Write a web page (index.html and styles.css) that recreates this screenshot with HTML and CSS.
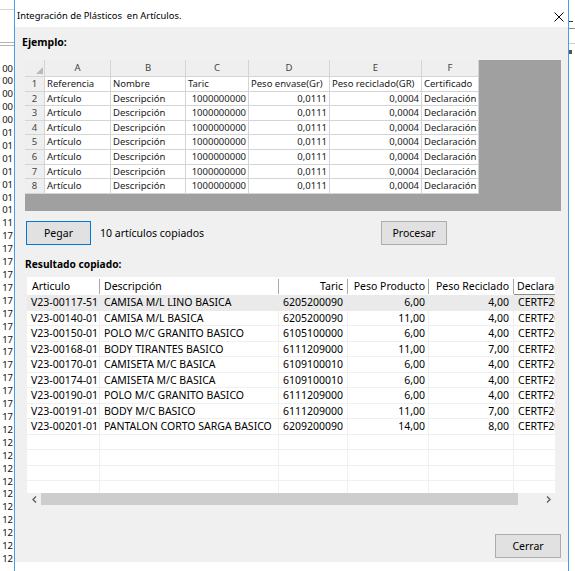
FILE: index.html
```html
<!DOCTYPE html>
<html lang="es">
<head>
<meta charset="utf-8">
<title>Integración de Plásticos en Artículos</title>
<link rel="stylesheet" href="styles.css">
</head>
<body>
<div class="screen">
  <div class="strip-left">
    <div class="strip-rule"></div>
    <div class="strip-eq"></div>
    <div class="strip-cells">
      <div>00</div><div>00</div><div>00</div><div>00</div><div>00</div>
      <div>01</div><div>01</div><div>01</div><div>01</div><div>01</div><div>01</div><div>01</div>
      <div>11</div>
      <div>17</div><div>17</div><div>17</div><div>17</div><div>17</div><div>17</div><div>17</div><div>17</div><div>17</div><div>17</div><div>17</div><div>17</div><div>17</div><div>17</div><div>17</div>
      <div>12</div><div>12</div><div>12</div><div>12</div><div>12</div><div>12</div><div>12</div><div>12</div><div>12</div><div>12</div><div>12</div>
    </div>
  </div>

  <div class="dialog">
    <div class="titlebar">
      <span class="title">Integración de Plásticos  en Artículos.</span>
      <svg class="close" viewBox="0 0 10 10" width="10" height="10"><path d="M0.5 0.5 L9.5 9.5 M9.5 0.5 L0.5 9.5" stroke="#000" stroke-width="1" fill="none"/></svg>
    </div>

    <div class="body">
      <div class="label">Ejemplo:</div>

      <div class="example">
        <div class="xl">
          <div class="xh corner"><svg viewBox="0 0 7 7" width="7" height="7"><path d="M7 0 L7 7 L0 7 Z" fill="#b9b9b9"/></svg></div>
          <div class="xh">A</div><div class="xh">B</div><div class="xh">C</div><div class="xh">D</div><div class="xh">E</div><div class="xh">F</div>

          <div class="xn">1</div><div>Referencia</div><div>Nombre</div><div>Taric</div><div>Peso envase(Gr)</div><div>Peso reciclado(GR)</div><div>Certificado</div>
          <div class="xn">2</div><div>Artículo</div><div>Descripción</div><div class="r">1000000000</div><div class="r">0,0111</div><div class="r">0,0004</div><div>Declaración</div>
          <div class="xn">3</div><div>Artículo</div><div>Descripción</div><div class="r">1000000000</div><div class="r">0,0111</div><div class="r">0,0004</div><div>Declaración</div>
          <div class="xn">4</div><div>Artículo</div><div>Descripción</div><div class="r">1000000000</div><div class="r">0,0111</div><div class="r">0,0004</div><div>Declaración</div>
          <div class="xn">5</div><div>Artículo</div><div>Descripción</div><div class="r">1000000000</div><div class="r">0,0111</div><div class="r">0,0004</div><div>Declaración</div>
          <div class="xn">6</div><div>Artículo</div><div>Descripción</div><div class="r">1000000000</div><div class="r">0,0111</div><div class="r">0,0004</div><div>Declaración</div>
          <div class="xn">7</div><div>Artículo</div><div>Descripción</div><div class="r">1000000000</div><div class="r">0,0111</div><div class="r">0,0004</div><div>Declaración</div>
          <div class="xn">8</div><div>Artículo</div><div>Descripción</div><div class="r">1000000000</div><div class="r">0,0111</div><div class="r">0,0004</div><div>Declaración</div>
        </div>
      </div>

      <div class="actions">
        <button class="btn btn-default btn-pegar">Pegar</button>
        <span class="count">10 artículos copiados</span>
        <button class="btn btn-procesar">Procesar</button>
      </div>

      <div class="label label-result">Resultado copiado:</div>

      <div class="gv">
        <div class="gv-head">
          <div class="h h1">Articulo</div>
          <div class="h h2">Descripción</div>
          <div class="h h3">Taric</div>
          <div class="h h4">Peso Producto</div>
          <div class="h h5">Peso Reciclado</div>
          <div class="h h6">Declaración</div>
        </div>
        <div class="gv-body">
          <div class="gv-row sel"><div class="c1">V23-00117-51</div><div class="c2">CAMISA M/L LINO BASICA</div><div class="c3">6205200090</div><div class="c4">6,00</div><div class="c5">4,00</div><div class="c6">CERTF2023</div></div>
          <div class="gv-row"><div class="c1">V23-00140-01</div><div class="c2">CAMISA M/L BASICA</div><div class="c3">6205200090</div><div class="c4">11,00</div><div class="c5">4,00</div><div class="c6">CERTF2023</div></div>
          <div class="gv-row"><div class="c1">V23-00150-01</div><div class="c2">POLO M/C GRANITO BASICO</div><div class="c3">6105100000</div><div class="c4">6,00</div><div class="c5">4,00</div><div class="c6">CERTF2023</div></div>
          <div class="gv-row"><div class="c1">V23-00168-01</div><div class="c2">BODY TIRANTES BASICO</div><div class="c3">6111209000</div><div class="c4">11,00</div><div class="c5">7,00</div><div class="c6">CERTF2023</div></div>
          <div class="gv-row"><div class="c1">V23-00170-01</div><div class="c2">CAMISETA M/C BASICA</div><div class="c3">6109100010</div><div class="c4">6,00</div><div class="c5">4,00</div><div class="c6">CERTF2023</div></div>
          <div class="gv-row"><div class="c1">V23-00174-01</div><div class="c2">CAMISETA M/C BASICA</div><div class="c3">6109100010</div><div class="c4">6,00</div><div class="c5">4,00</div><div class="c6">CERTF2023</div></div>
          <div class="gv-row"><div class="c1">V23-00190-01</div><div class="c2">POLO M/C GRANITO BASICO</div><div class="c3">6111209000</div><div class="c4">6,00</div><div class="c5">4,00</div><div class="c6">CERTF2023</div></div>
          <div class="gv-row"><div class="c1">V23-00191-01</div><div class="c2">BODY M/C BASICO</div><div class="c3">6111209000</div><div class="c4">11,00</div><div class="c5">7,00</div><div class="c6">CERTF2023</div></div>
          <div class="gv-row"><div class="c1">V23-00201-01</div><div class="c2">PANTALON CORTO SARGA BASICO</div><div class="c3">6209200090</div><div class="c4">14,00</div><div class="c5">8,00</div><div class="c6">CERTF2023</div></div>
          <div class="gv-row"><div class="c1"></div><div class="c2"></div><div class="c3"></div><div class="c4"></div><div class="c5"></div><div class="c6"></div></div>
          <div class="gv-row"><div class="c1"></div><div class="c2"></div><div class="c3"></div><div class="c4"></div><div class="c5"></div><div class="c6"></div></div>
          <div class="gv-row"><div class="c1"></div><div class="c2"></div><div class="c3"></div><div class="c4"></div><div class="c5"></div><div class="c6"></div></div>
          <div class="gv-row"><div class="c1"></div><div class="c2"></div><div class="c3"></div><div class="c4"></div><div class="c5"></div><div class="c6"></div></div>
        </div>
        <div class="gv-scroll">
          <div class="sb-btn"><svg viewBox="0 0 5 7" width="5" height="7"><path d="M4 0.5 L1 3.5 L4 6.5" stroke="#606060" stroke-width="1.4" fill="none"/></svg></div>
          <div class="sb-thumb"></div>
          <div class="sb-track"></div>
          <div class="sb-btn"><svg viewBox="0 0 5 7" width="5" height="7"><path d="M1 0.5 L4 3.5 L1 6.5" stroke="#606060" stroke-width="1.4" fill="none"/></svg></div>
        </div>
      </div>

      <div class="footer">
        <button class="btn btn-cerrar">Cerrar</button>
      </div>
    </div>
    <div class="dialog-bottom"></div>
  </div>

  <div class="strip-right">
    <div class="rs-a"></div>
    <div class="rs-b"></div>
    <div class="rs-c"></div>
    <div class="rs-d"></div>
  </div>
</div>
</body>
</html>
```

FILE: styles.css
```css
* { box-sizing: border-box; }

html, body {
  margin: 0;
  padding: 0;
}

body {
  width: 575px;
  height: 571px;
  overflow: hidden;
  background: #fff;
  color: #000;
  font-family: "Noto Sans", "Open Sans", sans-serif;
  font-size: 10.5px;
}

.screen {
  display: flex;
  width: 575px;
  height: 571px;
}

/* background spreadsheet peeking on the left */
.strip-left {
  width: 14px;
  flex: none;
  background: #fff;
  overflow: hidden;
  padding-top: 9px;
}

.strip-rule {
  height: 1px;
  background: #d6d6d6;
}

.strip-eq {
  margin-top: 32px;
  height: 4px;
  border-top: 1px solid #b4b4b4;
  border-bottom: 1px solid #b4b4b4;
}

.strip-cells {
  margin-top: 16.5px;
  font-size: 9.5px;
  line-height: 12.9px;
  text-align: right;
  white-space: nowrap;
  color: #111;
  padding-right: 1px;
}

/* dialog window */
.dialog {
  width: 555px;
  flex: none;
  display: flex;
  flex-direction: column;
  background: #fff;
  border-left: 1px solid #4c9be6;
  border-right: 1px solid #4c9be6;
}

.titlebar {
  height: 27px;
  flex: none;
  display: flex;
  justify-content: space-between;
  align-items: flex-start;
  padding: 8px 4px 0 2px;
  background: #fff;
}

.title {
  font-size: 9.4px;
  line-height: 16px;
  white-space: pre;
}

.close {
  margin-top: 4px;
  display: block;
}

.body {
  height: 535px;
  flex: none;
  display: flex;
  flex-direction: column;
  align-items: flex-start;
  background: #f0f0f0;
}

.label {
  font-weight: 700;
  line-height: 16px;
  margin: 7px 0 0 7px;
}

.label-result {
  margin: 11px 0 0 10px;
  font-size: 10.2px;
}

/* example spreadsheet picture */
.example {
  margin: 10px 0 0 10px;
  width: 536px;
  height: 151px;
  background: #a0a0a0;
}

.xl {
  display: grid;
  grid-template-columns: 19px 65px 74px 62px 80px 91px 56px;
  grid-template-rows: 16px repeat(8, 13.6px);
  gap: 1px;
  width: 454px;
  padding: 0 1px 1px 0;
  background: #d4d4d4;
  font-size: 9.5px;
  color: #1a1a1a;
}

.xl > div {
  background: #fff;
  line-height: 13.6px;
  padding: 0 2px;
  white-space: nowrap;
  overflow: hidden;
}

.xl > .xh {
  background: #efefef;
  line-height: 16px;
  text-align: center;
  color: #444;
}

.xl > .corner {
  display: flex;
  align-items: flex-end;
  justify-content: flex-end;
  padding: 0 1px 2px 0;
}

.xl > .corner svg {
  display: block;
}

.xl > .xn {
  background: #efefef;
  text-align: center;
  color: #444;
}

.xl > .r {
  text-align: right;
}

/* actions row */
.actions {
  display: flex;
  align-items: center;
  width: 421px;
  margin: 10px 0 0 11px;
}

.btn {
  height: 24px;
  padding: 0;
  font: inherit;
  line-height: 22px;
  color: #000;
  background: #e1e1e1;
  border: 1px solid #adadad;
  border-radius: 0;
}

.btn-default {
  border-color: #0078d7;
}

.btn-pegar {
  width: 65px;
}

.btn-procesar,
.btn-cerrar {
  width: 66px;
}

.count {
  margin-left: 9px;
}

.btn-procesar {
  margin-left: auto;
}

/* result grid */
.gv {
  margin: 5px 0 0 12px;
  width: 528px;
  height: 228px;
  display: flex;
  flex-direction: column;
  overflow: hidden;
  background: #fff;
}

.gv-head,
.gv-row {
  display: grid;
  grid-template-columns: 73px 179px 69px 81px 85px 90px;
  width: 577px;
  flex: none;
}

.gv-head {
  height: 18px;
  background: #fff;
}

.h {
  line-height: 18px;
  white-space: nowrap;
  overflow: hidden;
  padding: 0 4px;
  background-image: linear-gradient(#a8a8a8, #a8a8a8);
  background-repeat: no-repeat;
  background-size: 1px 15px;
  background-position: right 0 top 2px;
}

.h1 { padding-left: 5px; }
.h3 { text-align: right; padding-right: 5px; }
.h4 { text-align: right; padding-right: 4px; }
.h5 { text-align: right; padding-right: 5px; }
.h6 {
  padding-left: 3px;
  background-image: linear-gradient(#8c8c8c, #8c8c8c);
  background-size: 100% 1px;
  background-position: left 0 bottom 0;
}

.gv-body {
  height: 198px;
  flex: none;
  overflow: hidden;
}

.gv-row {
  height: 15.5px;
}

.gv-row > div {
  line-height: 14.5px;
  padding: 0 4px;
  white-space: nowrap;
  overflow: hidden;
  border-right: 1px solid #f0f0f0;
  border-bottom: 1px solid #f0f0f0;
}

.gv-row.sel {
  background: #eaeaea;
}

.gv-row.sel > div {
  border-color: #eaeaea;
}

.gv-row > .c4 { text-align: right; padding-right: 3px; }
.gv-row > .c5 { text-align: right; padding-right: 4px; }

.gv-scroll {
  height: 12px;
  flex: none;
  display: flex;
  background: #f0f0f0;
}

.sb-btn {
  width: 14px;
  flex: none;
  display: flex;
  align-items: center;
  justify-content: center;
}

.sb-btn svg {
  display: block;
}

.sb-thumb {
  width: 477px;
  flex: none;
  background: #cdcdcd;
}

.sb-track {
  flex: 1;
}

/* footer */
.footer {
  align-self: flex-end;
  margin: 29px 7px 0 0;
}

.dialog-bottom {
  flex: 1;
  background: #fff;
}

/* background window on the right */
.strip-right {
  width: 6px;
  flex: none;
  background: #fff;
  padding-top: 21px;
}

.rs-a {
  width: 4px;
  height: 1px;
  background: #333;
}

.rs-b {
  margin-top: 6px;
  height: 1px;
  background: #8a8a8a;
}

.rs-c {
  margin-top: 14px;
  height: 1px;
  background: #cfcfcf;
}

.rs-d {
  margin-top: 6px;
  width: 3px;
  height: 4px;
  background: #555;
}
```
